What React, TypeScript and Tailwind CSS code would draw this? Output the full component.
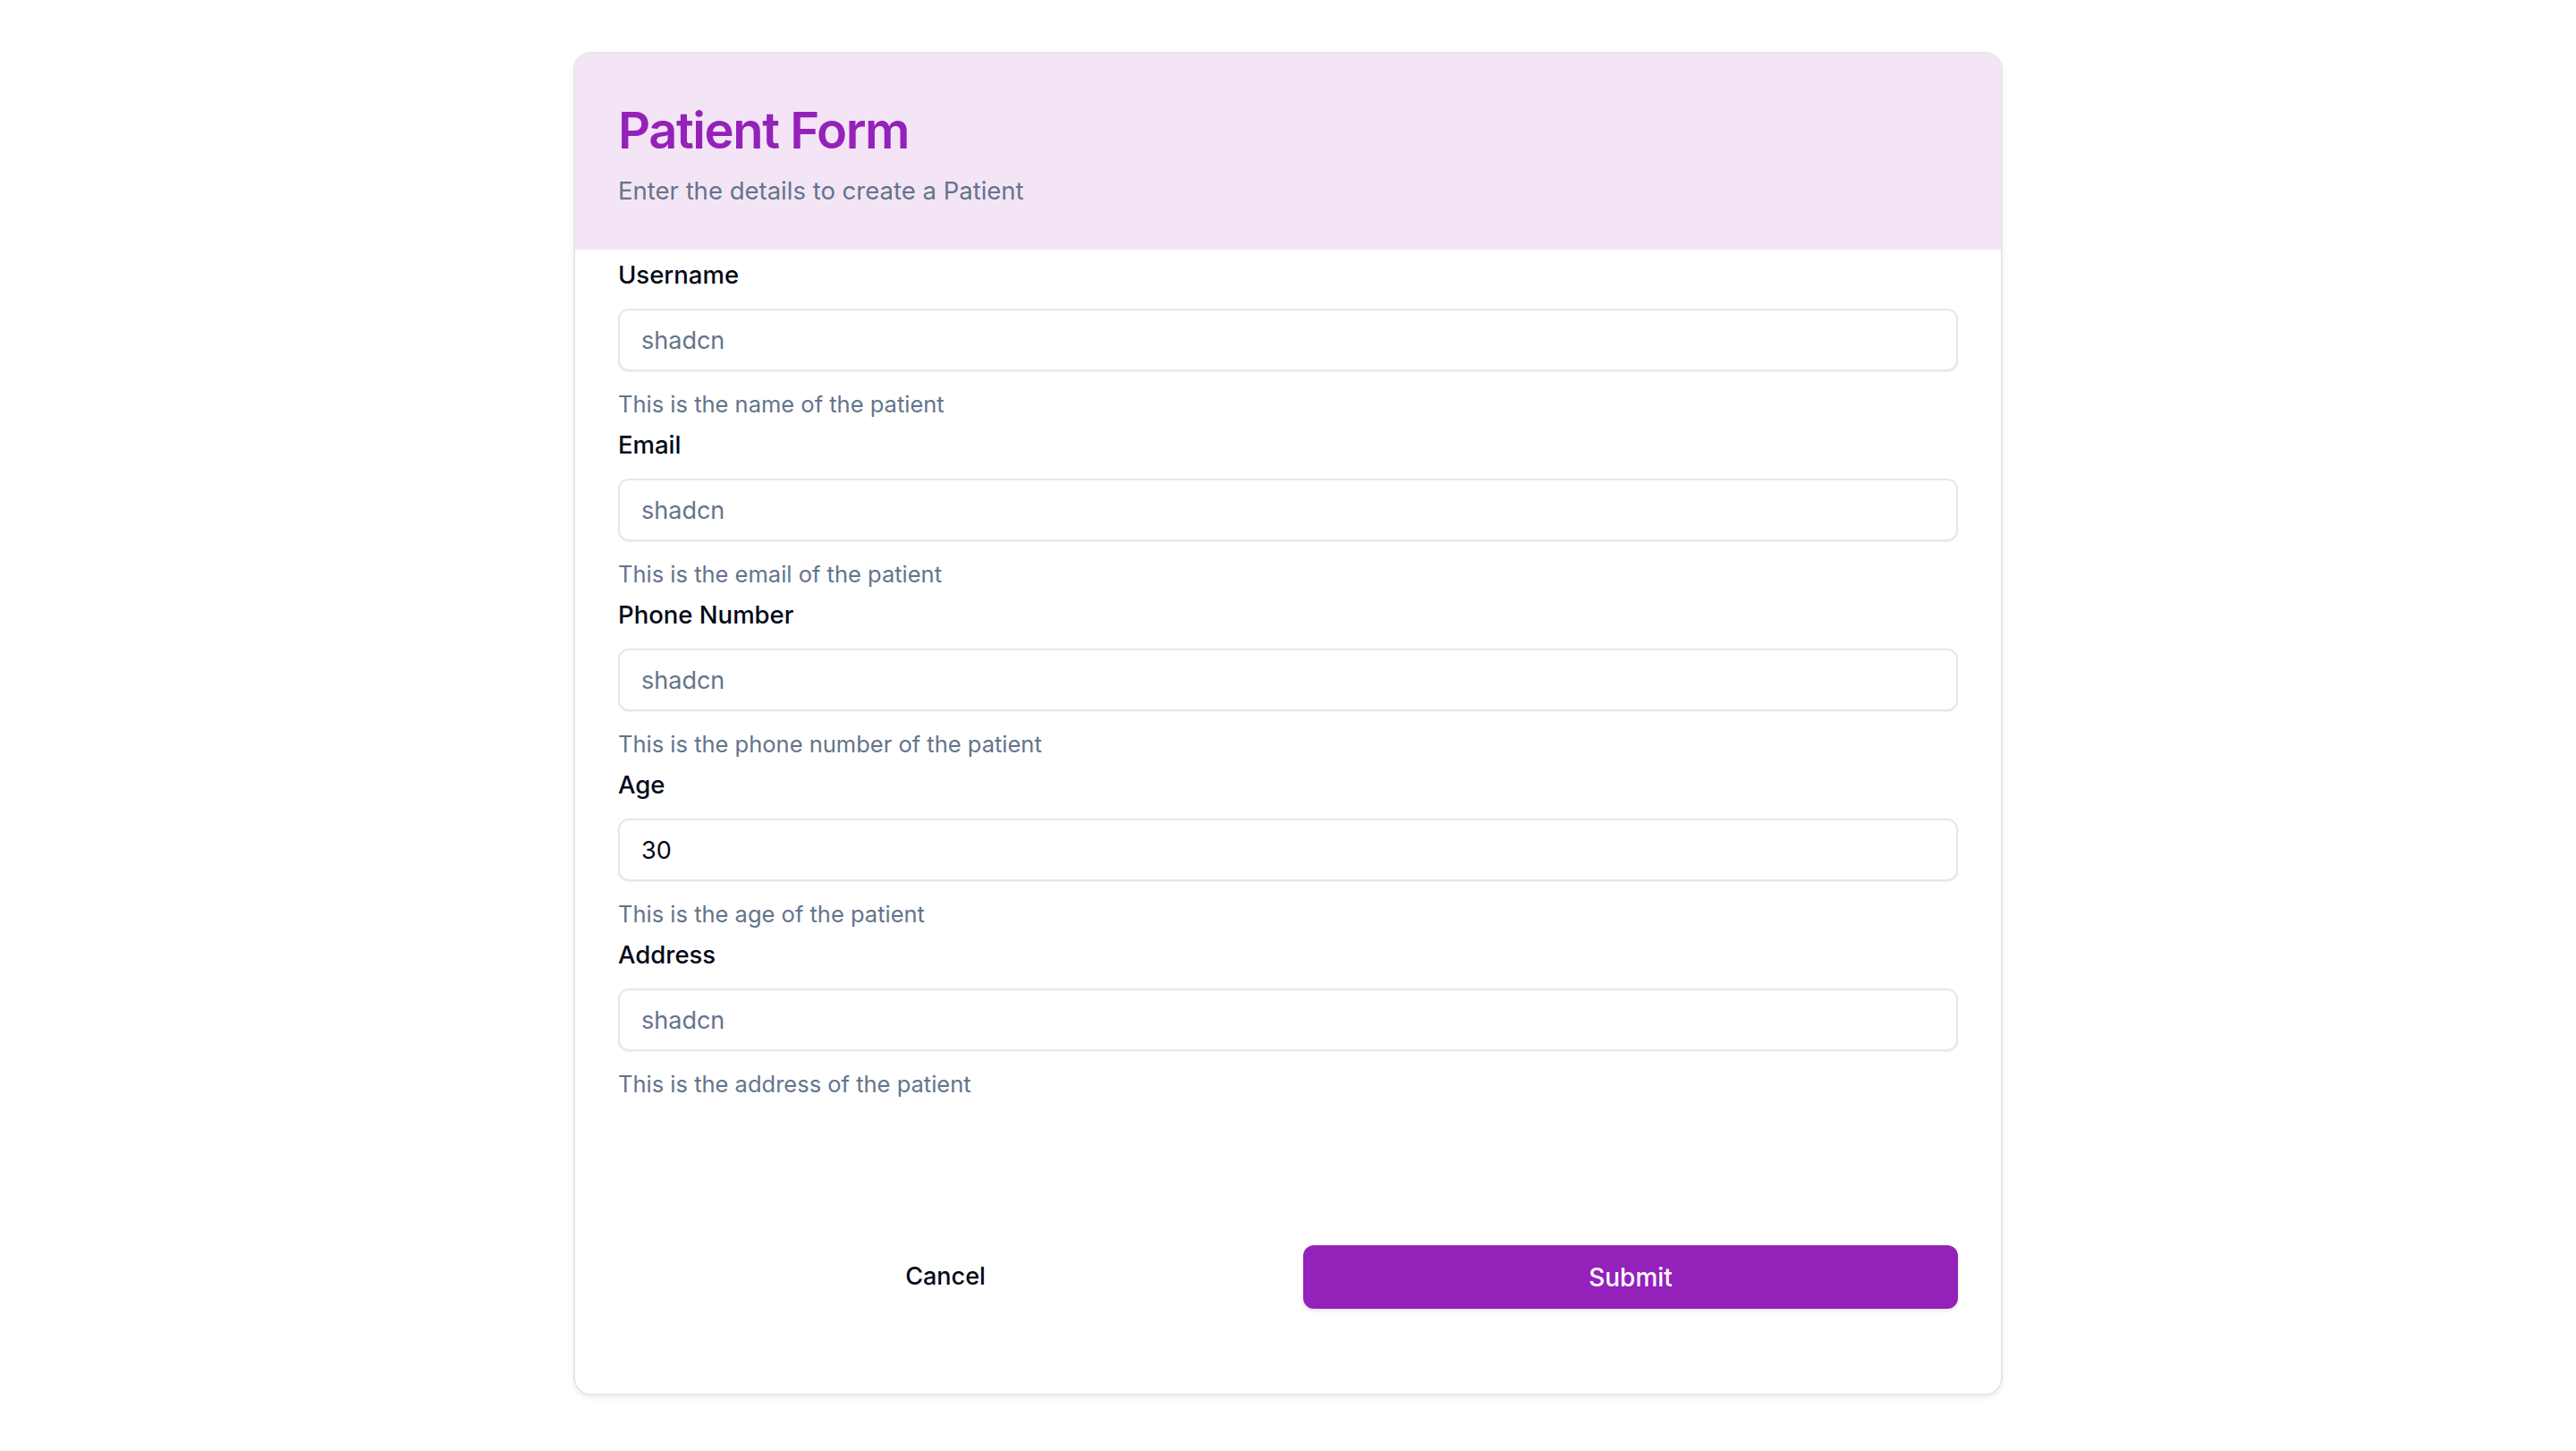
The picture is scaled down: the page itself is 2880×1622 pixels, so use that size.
import type { ReactNode } from "react";

interface FieldProps {
  label: string;
  help: string;
  placeholder?: string;
  defaultValue?: string;
  type?: string;
}

function Field({ label, help, placeholder, defaultValue, type = "text" }: FieldProps) {
  return (
    <div className="flex flex-col">
      <label className="text-[27.5px] leading-[26px] font-medium text-[#020817]">{label}</label>
      <input
        type={type}
        placeholder={placeholder}
        defaultValue={defaultValue}
        className="mt-[25px] h-[70px] w-full rounded-[12px] border-2 border-[#e2e8f0] bg-white px-[24px] text-[27px] text-[#020817] shadow-[0_1px_2px_rgba(0,0,0,0.05)] outline-none placeholder:text-[#64748b]"
      />
      <p className="mt-[24px] text-[25.5px] leading-[26px] text-[#64748b]">{help}</p>
    </div>
  );
}

function Card({ children }: { children: ReactNode }) {
  return (
    <div className="mx-auto w-[1598px] overflow-hidden rounded-[20px] border-2 border-[#e5e7eb] bg-white shadow-[0_3px_6px_rgba(0,0,0,0.06)]">
      {children}
    </div>
  );
}

export default function App() {
  return (
    <div className="min-h-screen bg-white pt-[58px] font-['Inter','Noto_Sans',sans-serif]">
      <Card>
        {/* Header */}
        <div className="bg-[#f3e5f6] px-[48px] pt-[58px] pb-[53px]">
          <h1 className="text-[56px] leading-none font-semibold tracking-tight text-[#9421b9]">
            Patient Form
          </h1>
          <p className="mt-[26px] text-[27.5px] leading-[26px] text-[#64748b]">
            Enter the details to create a Patient
          </p>
        </div>

        {/* Form body */}
        <form className="px-[48px] pt-[15px] pb-[95px]" onSubmit={(e) => e.preventDefault()}>
          <div className="flex flex-col gap-[19px]">
            <Field label="Username" placeholder="shadcn" help="This is the name of the patient" />
            <Field label="Email" placeholder="shadcn" help="This is the email of the patient" />
            <Field label="Phone Number" placeholder="shadcn" help="This is the phone number of the patient" />
            <Field label="Age" defaultValue="30" help="This is the age of the patient" />
            <Field label="Address" placeholder="shadcn" help="This is the address of the patient" />
          </div>

          <div className="mt-[167px] grid grid-cols-2 gap-[34px]">
            <button
              type="button"
              className="h-[71px] rounded-[12px] text-[27px] font-medium text-[#020817]"
            >
              Cancel
            </button>
            <button
              type="submit"
              className="h-[71px] rounded-[12px] bg-[#9421b9] text-[28px] font-medium text-white shadow-[0_2px_4px_rgba(0,0,0,0.12)]"
            >
              Submit
            </button>
          </div>
        </form>
      </Card>
    </div>
  );
}
